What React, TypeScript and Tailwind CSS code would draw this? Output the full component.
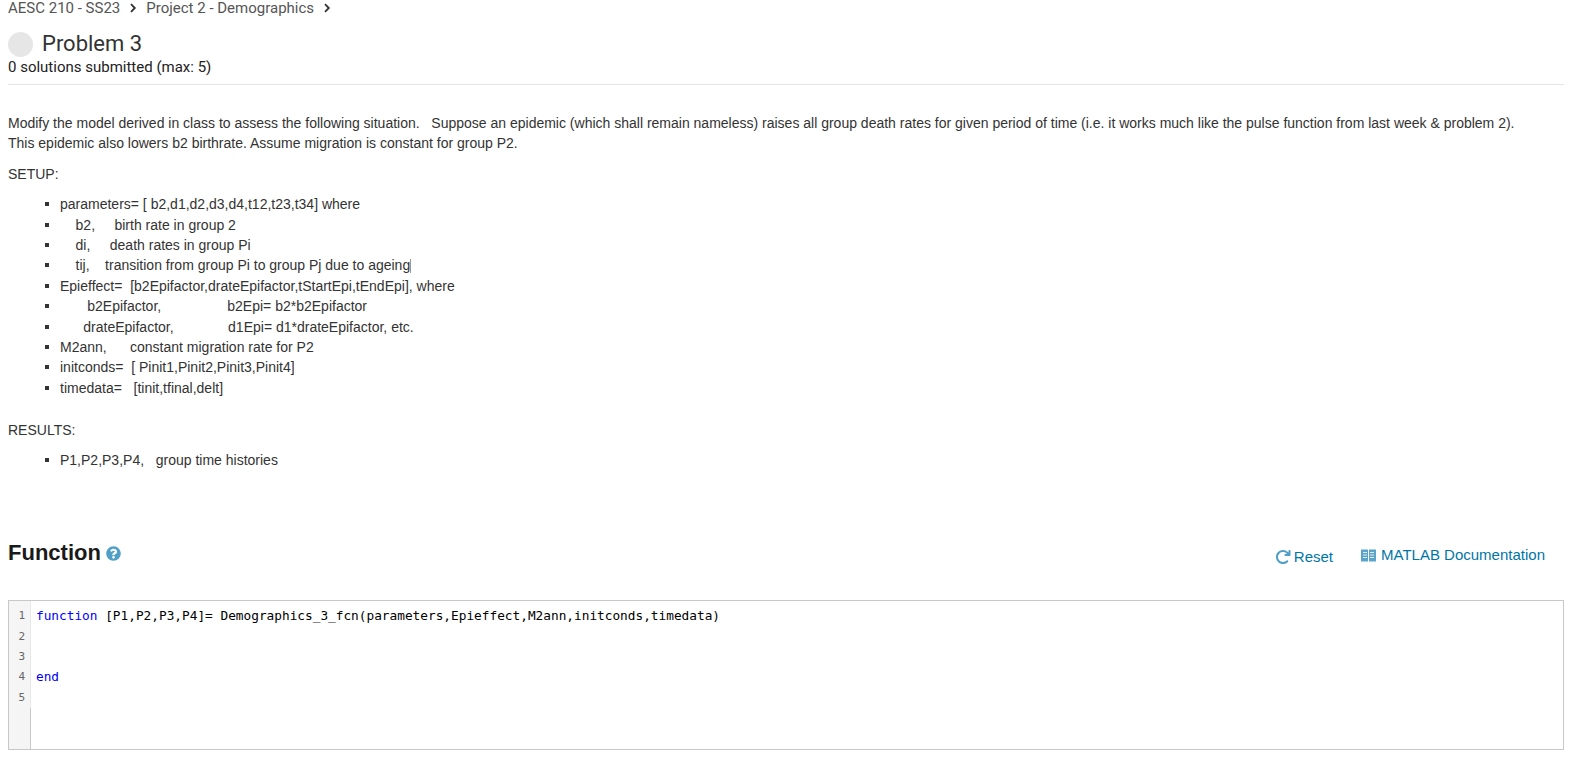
import React from "react";
import { FaQuestionCircle } from "react-icons/fa";
import { FaArrowRotateRight } from "react-icons/fa6";

function Chevron() {
  return (
    <svg width="8" height="10" viewBox="0 0 8 10" className="shrink-0">
      <path d="M2 1.2 L5.8 5 L2 8.8" fill="none" stroke="#333" strokeWidth="1.8" />
    </svg>
  );
}

function BookIcon() {
  return (
    <svg width="15" height="13" viewBox="0 0 15 13" className="shrink-0">
      <rect x="0" y="0.5" width="15" height="12" fill="#5aa3c9" />
      <g stroke="#dcecf5" strokeWidth="1">
        <path d="M7.5 0 V13" stroke="#fff" />
        <path d="M2 3.5 H6 M2 6 H6 M2 8.5 H6 M9 3.5 H13 M9 6 H13 M9 8.5 H13" />
      </g>
    </svg>
  );
}

const items = [
  "parameters= [ b2,d1,d2,d3,d4,t12,t23,t34] where",
  "    b2,     birth rate in group 2",
  "    di,     death rates in group Pi",
  "    tij,    transition from group Pi to group Pj due to ageing",
  "Epieffect=  [b2Epifactor,drateEpifactor,tStartEpi,tEndEpi], where",
  "       b2Epifactor,                 b2Epi= b2*b2Epifactor",
  "      drateEpifactor,              d1Epi= d1*drateEpifactor, etc.",
  "M2ann,      constant migration rate for P2",
  "initconds=  [ Pinit1,Pinit2,Pinit3,Pinit4]",
  "timedata=   [tinit,tfinal,delt]",
];

export default function App() {
  return (
    <div className="bg-white h-[760px] overflow-hidden pl-2 pr-2.5 font-['Liberation_Sans',Arial,sans-serif] text-[#333] text-[14px] leading-[20.4px]">
      <div className="flex items-center gap-[9px] h-4 font-['Roboto',sans-serif] text-[15px] leading-4 text-[#555]">
        <span>AESC 210 - SS23</span>
        <Chevron />
        <span>Project 2 - Demographics</span>
        <Chevron />
      </div>
      <div className="flex items-center gap-[9px] mt-[16px] h-6 font-['Roboto',sans-serif]">
        <div className="w-[25px] h-[25px] rounded-full bg-[#e6e6e6]" />
        <h1 className="text-[22px] leading-6 text-[#333]">Problem 3</h1>
      </div>
      <div className="mt-[1px] h-5 font-['Roboto',sans-serif] text-[15px] leading-5 text-[#222]">0 solutions submitted (max: 5)</div>
      <div className="mt-[7px] border-t border-[#e6e6e6]" />

      <p className="mt-[28px] whitespace-pre">
        {"Modify the model derived in class to assess the following situation.   Suppose an epidemic (which shall remain nameless) raises all group death rates for given period of time (i.e. it works much like the pulse function from last week & problem 2).\nThis epidemic also lowers b2 birthrate. Assume migration is constant for group P2."}
      </p>
      <p className="mt-[10px]">SETUP:</p>
      <ul className="mt-[10px] pl-[52px] list-none">
        {items.map((t) => (
          <li key={t} className="relative whitespace-pre">
            <span className="absolute left-[-15px] top-[8px] w-[4px] h-[4px] bg-[#333]" />
            {t}
            {t.endsWith("ageing") && <span className="inline-block w-px h-[14px] bg-[#999] align-[-3px]" />}
          </li>
        ))}
      </ul>
      <p className="mt-[22px]">RESULTS:</p>
      <ul className="mt-[9px] pl-[52px] list-none">
        <li className="relative whitespace-pre">
          <span className="absolute left-[-15px] top-[8px] w-[4px] h-[4px] bg-[#333]" />
          {"P1,P2,P3,P4,   group time histories"}
        </li>
      </ul>

      <div className="mt-[69px] flex items-start justify-between h-[61px]">
        <div className="flex items-center gap-[5px]">
          <h2 className="text-[22px] leading-7 font-bold text-[#1a1a1a]">Function</h2>
          <FaQuestionCircle className="text-[15px] text-[#4f9fc7]" />
        </div>
        <div className="flex items-start pr-[19px] pt-[6px] text-[15px] leading-5 text-[#0076a8]">
          <span className="flex items-center gap-[3px] mt-[2px]">
            <FaArrowRotateRight className="text-[16px] text-[#4f9fc7]" />
            Reset
          </span>
          <span className="flex items-center gap-[5px] ml-[28px]">
            <BookIcon />
            MATLAB Documentation
          </span>
        </div>
      </div>

      <div className="relative h-[150px] border border-[#c8c8c8] flex font-['DejaVu_Sans_Mono',monospace] text-[12.77px] leading-[20.4px]">
        <div className="w-[22px] bg-[#f5f5f5] border-r border-[#c8c8c8] shrink-0">
          <div className="h-[107px] -mr-px border-r border-[#e8e8e8] pt-[5px] pr-[5px] text-right text-[11px] text-[#666]">
            {[1, 2, 3, 4, 5].map((n) => (
              <div key={n}>{n}</div>
            ))}
          </div>
        </div>
        <div className="pt-[5px] pl-[5px] whitespace-pre text-black">
          <div>
            <span className="text-[#0000ff]">function</span>
            {" [P1,P2,P3,P4]= Demographics_3_fcn(parameters,Epieffect,M2ann,initconds,timedata)"}
          </div>
          <div>&nbsp;</div>
          <div>&nbsp;</div>
          <div className="text-[#0000ff]">end</div>
          <div>&nbsp;</div>
        </div>
      </div>
    </div>
  );
}
